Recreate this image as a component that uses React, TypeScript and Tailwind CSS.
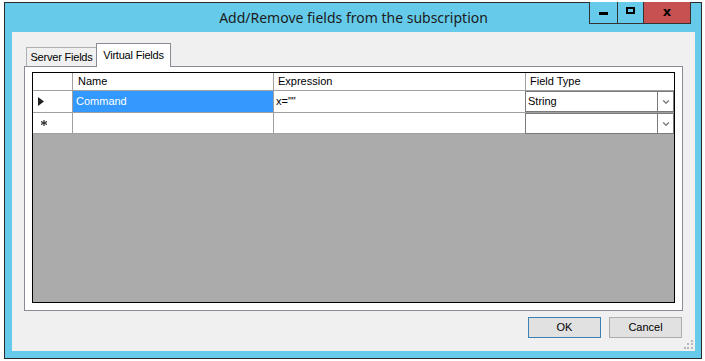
import { ChevronDown } from "lucide-react";

const sans = "font-['Liberation_Sans',Arial,sans-serif]";

function CaptionButtons() {
  return (
    <div className="absolute right-[4px] top-[-1px] flex h-[22px] border border-[#333] border-t-0">
      <div className="flex w-[28px] items-center justify-center border-r border-[#333] bg-[#66cbea]">
        <div className="mt-[2px] h-[3px] w-[9px] bg-black" />
      </div>
      <div className="flex w-[26px] items-center justify-center border-r border-[#333] bg-[#66cbea]">
        <div className="mb-[4px] h-[7px] w-[9px] border-2 border-black" />
      </div>
      <div className="flex w-[46px] items-center justify-center bg-[#c75050]">
        <span className="mb-[3px] font-['DejaVu_Sans',sans-serif] text-[13px] font-bold leading-none text-black">
          x
        </span>
      </div>
    </div>
  );
}

function Combo({ value }: { value: string }) {
  return (
    <div className="flex h-[21px] w-[149px] border border-[#7a7a7a] bg-white">
      <div className="flex flex-1 items-center pl-[2px] text-[11px] text-black">{value}</div>
      <div className="flex w-[16px] items-center justify-center border-l border-[#7a7a7a]">
        <ChevronDown size={10} strokeWidth={3} className="text-[#7b7b7b]" />
      </div>
    </div>
  );
}

function Grid() {
  const head = "border-r border-b border-[#a0a0a0] bg-white";
  const cell = "border-r border-b border-[#a0a0a0] bg-white";
  return (
    <div className={`flex flex-1 flex-col border border-black bg-[#ababab] ${sans} text-[11px]`}>
      <div className="flex h-[18px]">
        <div className={`${head} w-[40px]`} />
        <div className={`${head} w-[201px] pl-[5px] leading-[16px]`}>Name</div>
        <div className={`${head} w-[252px] pl-[4px] leading-[16px]`}>Expression</div>
        <div className={`${head} w-[148px] border-r-0 pl-[4px] leading-[16px]`}>Field Type</div>
      </div>
      <div className="flex h-[22px]">
        <div className={`${head} flex w-[40px] items-center pl-[5px]`}>
          <svg width="6" height="9" viewBox="0 0 6 9">
            <path d="M0 0 L6 4.5 L0 9 Z" fill="#222" />
          </svg>
        </div>
        <div className="flex w-[201px] items-center border-r border-b border-[#a0a0a0] bg-[#3399ff] pl-[3px] text-white">
          Command
        </div>
        <div className={`${cell} flex w-[252px] items-center pl-[2px]`}>x=""</div>
        <div className="flex w-[148px] items-start border-b border-[#a0a0a0] bg-white">
          <div className="-ml-px">
            <Combo value="String" />
          </div>
        </div>
      </div>
      <div className="flex h-[21px]">
        <div className={`${head} flex w-[40px] items-center pl-[8px]`}>
          <svg width="6" height="6" viewBox="0 0 6 6">
            <path d="M3 0 L3 6 M0 1.5 L6 4.5 M0 4.5 L6 1.5" stroke="#333" strokeWidth="1.2" />
          </svg>
        </div>
        <div className={`${cell} w-[201px]`} />
        <div className={`${cell} w-[252px]`} />
        <div className="flex w-[148px] items-start border-b border-[#a0a0a0] bg-white">
          <div className="-ml-px">
            <Combo value="" />
          </div>
        </div>
      </div>
    </div>
  );
}

function Grip() {
  const dot = "h-[2px] w-[2px] bg-[#b8b8b8]";
  return (
    <div className="grid h-[9px] w-[9px] grid-cols-3 grid-rows-3 gap-[1px]">
      <span />
      <span />
      <span className={dot} />
      <span />
      <span className={dot} />
      <span className={dot} />
      <span className={dot} />
      <span className={dot} />
      <span className={dot} />
    </div>
  );
}

export default function App() {
  return (
    <div className="h-[361px] w-[705px] overflow-hidden bg-white pl-[4px] pt-[2px]">
      <div className="relative flex h-[357px] w-[698px] flex-col border border-[#2b2b2b] bg-[#66cbea] px-[6px] pb-[7px] pl-[7px]">
        <div className="relative flex h-[29px] shrink-0 items-center justify-center">
          <span className="mb-[1px] font-['Noto_Sans',sans-serif] text-[14px] text-[#1b1b1b]">
            Add/Remove fields from the subscription
          </span>
          <CaptionButtons />
        </div>
        <div className="flex flex-1 flex-col bg-[#f0f0f0] px-[12px] pt-[11px]">
          <div className={`flex h-[23px] items-end pl-[2px] ${sans} text-[11px] tracking-[-0.2px] text-black`}>
            <div className="flex h-[19px] w-[71px] items-center justify-center border border-b-0 border-[#adb2b5] bg-[#f0f0f0] pt-[1px]">
              Server Fields
            </div>
            <div className="relative z-10 -mb-px -ml-px flex h-[24px] w-[75px] items-start justify-center border border-b-0 border-[#898c95] bg-white pt-[3px]">
              Virtual Fields
            </div>
          </div>
          <div className="flex h-[245px] border border-[#898c95] bg-white px-[7px] pb-[7px] pt-[5px]">
            <Grid />
          </div>
          <div className="flex flex-1 items-start justify-end gap-[8px] pr-[1px] pt-[6px]">
            <button className={`h-[21px] w-[73px] border border-[#3c7fb1] bg-[#e1e1e1] ${sans} text-[11px] text-black`}>
              OK
            </button>
            <button className={`h-[21px] w-[73px] border border-[#adadad] bg-[#e1e1e1] ${sans} text-[11px] text-black`}>
              Cancel
            </button>
          </div>
          <div className="-mr-[10px] mb-[2px] flex justify-end">
            <Grip />
          </div>
        </div>
      </div>
    </div>
  );
}
